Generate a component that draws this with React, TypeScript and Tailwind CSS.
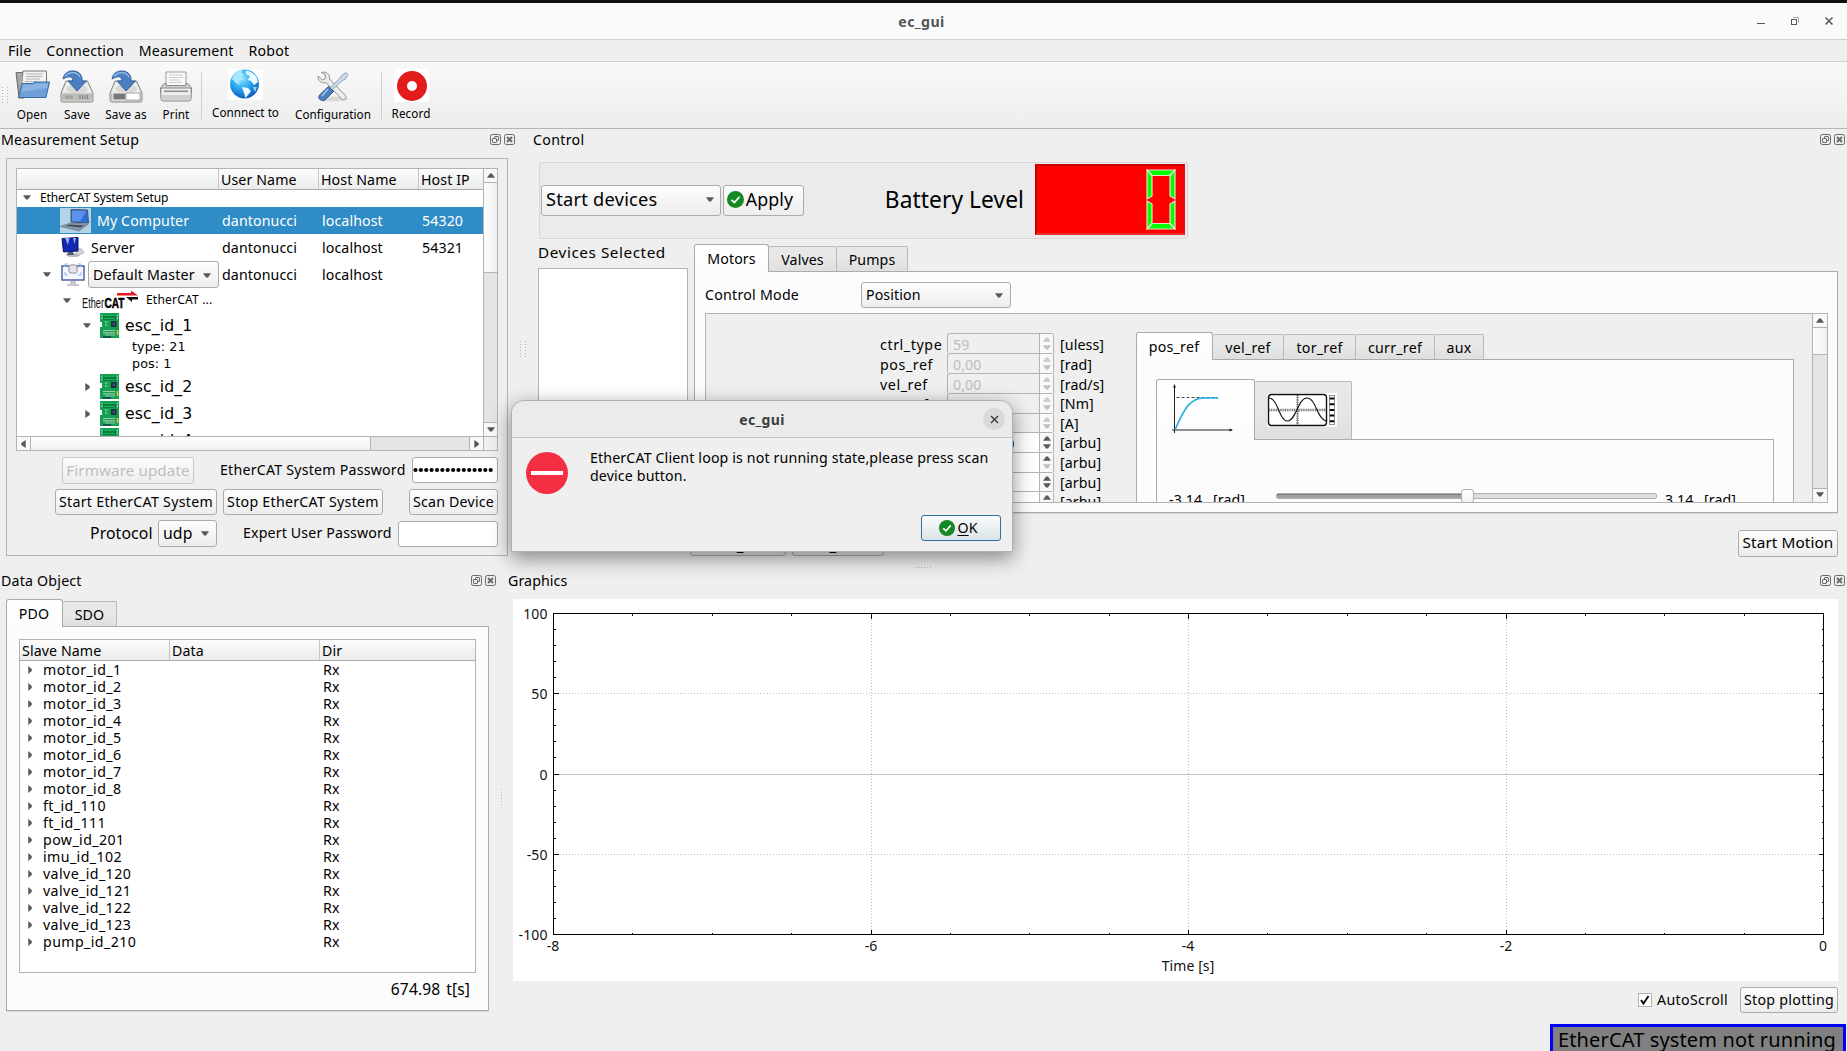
import React from "react";

type Kids = { children?: React.ReactNode; className?: string };

/* ---------- small shared pieces ---------- */

function Down({ className = "" }: { className?: string }) {
  return (
    <svg width="8" height="5" viewBox="0 0 8 5" className={`shrink-0 ${className}`}>
      <path d="M0 0.3H8L5 4.6H3Z" fill="#5a5a5a" />
    </svg>
  );
}

function Up({ faded = false }: { faded?: boolean }) {
  return (
    <svg width="8" height="5" viewBox="0 0 8 5" className="shrink-0">
      <path d="M0 4.7H8L5 0.4H3Z" fill={faded ? "#c9c9c9" : "#5a5a5a"} />
    </svg>
  );
}

function Side({ left = false, small = false }: { left?: boolean; small?: boolean }) {
  return (
    <svg width={small ? 4 : 5} height="8" viewBox="0 0 5 8" preserveAspectRatio="none" className="shrink-0">
      {left ? <path d="M4.7 0V8L0.3 5V3Z" fill="#5a5a5a" /> : <path d="M0.3 0V8L4.7 5V3Z" fill="#5a5a5a" />}
    </svg>
  );
}

function Btn({ children, className = "" }: Kids) {
  return (
    <button
      className={`flex shrink-0 items-center justify-center rounded-[3px] border border-[#ababab] bg-gradient-to-b from-[#fdfdfd] to-[#ededed] leading-none whitespace-nowrap ${className}`}
    >
      {children}
    </button>
  );
}

function Combo({ children, className = "" }: Kids) {
  return (
    <div
      className={`flex shrink-0 items-center justify-between rounded-[3px] border border-[#ababab] bg-gradient-to-b from-[#fdfdfd] to-[#ededed] pl-[4px] leading-none whitespace-nowrap ${className}`}
    >
      <span>{children}</span>
      <Down />
    </div>
  );
}

function Tab({ children, active = false, className = "" }: Kids & { active?: boolean }) {
  return active ? (
    <div
      className={`relative z-10 -mb-px flex shrink-0 items-center justify-center rounded-t-[3px] border border-b-0 border-[#ababab] bg-gradient-to-b from-white to-[#fcfcfc] leading-none ${className}`}
    >
      {children}
    </div>
  ) : (
    <div
      className={`mt-[2px] flex shrink-0 items-center justify-center rounded-t-[2px] border border-b-0 border-l-0 border-[#b9b9b9] bg-gradient-to-b from-[#e8e8e8] via-[#e7e7e7] to-[#dfdfdf] pt-[1px] leading-none ${className}`}
    >
      {children}
    </div>
  );
}

function DockButtons() {
  return (
    <svg width="26" height="12" viewBox="0 0 26 12" fill="none" stroke="#6b6a66" className="shrink-0">
      <rect x="0.5" y="0.5" width="10" height="10" rx="1.8" />
      <rect x="4.5" y="2.5" width="4" height="4" rx="0.5" />
      <rect x="2.5" y="4.5" width="4" height="4" rx="0.5" fill="#efefef" />
      <rect x="14.5" y="0.5" width="10" height="10" rx="1.8" />
      <path d="M17 3L22 8M22 3L17 8" strokeWidth="2" />
    </svg>
  );
}

function DockTitle({ children, className = "" }: Kids) {
  return (
    <div className={`flex h-[22px] shrink-0 items-center justify-between leading-none ${className}`}>
      <span>{children}</span>
      <DockButtons />
    </div>
  );
}

function GripV({ cols = 2 }: { cols?: number }) {
  return (
    <svg width="8" height="17" viewBox="0 0 8 17">
      {[0, 3, 6, 9, 12, 15].map((y) => (
        <g key={y} fill="#b4b4b4">
          <rect x="1" y={y} width="1" height="1" />
          {cols > 1 && <rect x="6" y={y} width="1" height="1" />}
        </g>
      ))}
    </svg>
  );
}

function Check({ size = 17 }: { size?: number }) {
  return (
    <svg width={size} height={size} viewBox="0 0 16 16" className="shrink-0">
      <circle cx="8" cy="8" r="8" fill="#158a24" />
      <path d="M4.2 8.3L7 10.8L11.8 5.4" fill="none" stroke="#fff" strokeWidth="1.6" />
    </svg>
  );
}

/* ---------- toolbar icons ---------- */

function OpenIcon() {
  return (
    <svg width="35" height="31" viewBox="0 0 35 31">
      <path d="M1 2.5H8L9 5V28H4Z" fill="#8d8f8c" stroke="#6d6f6c" />
      <path d="M8 1H31.5V20H6Z" fill="#f2f2f2" stroke="#777" />
      <path d="M11 4H28M11 6.5H27M11 9H25M10 11.5H22" stroke="#b3b3b3" />
      <path d="M2 3L7 3L8 16L5 28Z" fill="#aaa" />
      <path d="M7 13.5H18L20 12H34.5L31 27.5H3.5Z" fill="#6ea0d7" stroke="#3869a8" />
      <path d="M8 14.8H18.5L20.5 13.2H33L32 18L6.5 22Z" fill="#9bbfe6" opacity=".6" />
    </svg>
  );
}

function Drive({ as = false }: { as?: boolean }) {
  return (
    <svg width="34" height="33" viewBox="0 0 34 33">
      <path d="M6 11H27.5L33 23V30.5Q33 32 31.500 32H2.500Q1 32 1 30.500V23Z" fill="#dcdddb" stroke="#858783" />
      <path d="M7 12H26.500L31.500 22.500H2.500Z" fill="#eeeeed" />
      <ellipse cx="17" cy="19" rx="11" ry="4.500" fill="#d3d4d2" opacity=".8" />
      <path d="M1.500 23.500H32.500V30.500H1.500Z" fill="#babcb8" />
      {as ? (
        <>
          <rect x="4" y="23" width="13" height="7" fill="#777" stroke="#eee" />
          <rect x="17" y="23" width="14" height="7" fill="#fff" stroke="#aaa" />
        </>
      ) : (
        <>
          <path d="M5 25.500H13V28.500H5Z" fill="#a0a29e" />
          <path d="M20 25V29M22.500 25V29M25 25V29M27.500 25V29" stroke="#777" />
        </>
      )}
      <path d="M3 9C4 2 10 .5 14 1C20 1.500 22.500 6 22 11H26.500L17 21L8 11H12.500C13 7 10 5 3 9Z" fill="#4a7fc0" stroke="#2f5f9e" strokeWidth=".9" />
      <path d="M5 6.500C9 1.500 17 1 20 7" fill="none" stroke="#9fc0e6" strokeWidth="1.300" />
    </svg>
  );
}

function PrintIcon() {
  return (
    <svg width="32" height="31" viewBox="0 0 32 31">
      <path d="M6 1H26V16H6Z" fill="#fafafa" stroke="#999" />
      <path d="M9 4H23M9 6.500H23M9 9H20M9 11.500H22" stroke="#ccc" />
      <path d="M4 12.500H6V14.500H26V12.500H28L31.500 17V22H.5V17Z" fill="#d5d5d3" stroke="#8a8a88" />
      <path d="M.8 18.500Q.8 17 2.500 17H29.500Q31.200 17 31.200 18.500V27Q31.200 30 28.500 30H3.500Q.8 30 .8 27Z" fill="#ededeb" stroke="#858583" />
      <path d="M4 19.500H28V21H4Z" fill="#8c8c8a" />
      <path d="M2 24H30V27Q30 29 28 29H4Q2 29 2 27Z" fill="#cfcfcd" />
    </svg>
  );
}

function GlobeIcon() {
  return (
    <svg width="35" height="31" viewBox="0 0 35 31">
      <defs>
        <radialGradient id="globe" cx="0.4" cy="0.3" r="0.75">
          <stop offset="0" stopColor="#8fe6ff" />
          <stop offset="0.5" stopColor="#2aa6f0" />
          <stop offset="1" stopColor="#0b54b5" />
        </radialGradient>
      </defs>
      <rect width="35" height="31" fill="#fff" />
      <circle cx="16.500" cy="15" r="14.400" fill="url(#globe)" />
      <path d="M5 7C8 2.500 12 1 15 1L13 4L16 5L13.500 8L15.500 10L11 13L12 16L8 14L4 10Z" fill="#a5e8fb" />
      <path d="M18 1.500C23 2 27 5 29 9L30 13L26 16L23 12L20 11L22 7L18 5Z" fill="#e8faff" />
      <path d="M14 18L20 19L23 22L20 26L17.500 29L16 24Z" fill="#e8faff" />
      <path d="M25 18L29 18L27 23Z" fill="#8fdcf8" />
    </svg>
  );
}

function ToolsIcon() {
  return (
    <svg width="32" height="31" viewBox="0 0 32 31">
      <ellipse cx="16" cy="28" rx="15" ry="2.500" fill="#d9d9d9" />
      <path d="M1 5L5.500 9L8.500 7.500L8 3.500L4.500 1.500C9 0 13 3 12.500 8L28.500 24.500C30 27 27 30 24.500 28L9 11.500C4.500 13 0.500 9.500 1 5Z" fill="#eceeea" stroke="#8f918d" />
      <path d="M29 1.500L31 3.500L28.500 8L25.500 9.500L15 19L13 17L23 7L24.500 4.500Z" fill="#c9d8e8" stroke="#7f93a8" strokeWidth=".8" />
      <path d="M11.500 15.500L16.500 20.500L8 29C5 31 0 27.500 2.500 24Z" fill="#4c7fbd" stroke="#2c5690" />
      <path d="M11 18L5 25" stroke="#a4c3e8" strokeWidth="1.500" />
    </svg>
  );
}

function RecordIcon() {
  return (
    <svg width="35" height="33" viewBox="0 0 35 33">
      <rect width="35" height="33" fill="#fff" />
      <circle cx="18" cy="17" r="10" fill="none" stroke="#e21b1b" strokeWidth="10" />
    </svg>
  );
}

function Tool({ icon, label, className = "" }: { icon: React.ReactNode; label: string; className?: string }) {
  return (
    <div className={`flex shrink-0 flex-col items-center ${className}`}>
      <div className="flex h-[39px] items-center justify-center">{icon}</div>
      <span className="leading-none whitespace-nowrap">{label}</span>
    </div>
  );
}

/* ---------- tree icons ---------- */

function Laptop() {
  return (
    <svg width="31" height="25" viewBox="0 0 31 25" className="shrink-0">
      <rect width="31" height="25" fill="#b4d3e8" />
      <path d="M11 1.500L27.500 2L28.500 15L11 14Z" fill="#2e6fd8" stroke="#45536b" />
      <path d="M12 2.500L26 3L20 13.500L12 13Z" fill="#6fa5ee" opacity=".7" />
      <path d="M10 15L28.500 16L19 23L0.500 18.500Z" fill="#8a97a8" stroke="#5d6b7d" strokeWidth=".6" />
      <path d="M9.500 16.500L24 17.500L20.500 19.500L6 18Z" fill="#3f4c5e" />
    </svg>
  );
}

function ServerIcon() {
  return (
    <svg width="24" height="21" viewBox="0 0 24 21" className="shrink-0">
      <ellipse cx="12" cy="18" rx="7" ry="2" fill="#b9bcc4" />
      <path d="M15 11L21 12L23 16L16 19Z" fill="#d2d4da" stroke="#999" strokeWidth=".5" />
      <path d="M1 1.500L17 .5V14L2.500 15Z" fill="#1427b4" stroke="#0a1466" />
      <path d="M4 1L7 8L8.500 1ZM12 1L13.500 7L15 1Z" fill="#8fb2f5" />
      <path d="M7 15H12L13 18H6Z" fill="#555c6b" />
    </svg>
  );
}

function MonitorIcon() {
  return (
    <svg width="24" height="23" viewBox="0 0 24 23" fill="none" className="shrink-0">
      <rect x="1" y="3" width="22" height="14" fill="#f4f7ff" stroke="#4a5896" strokeWidth="1.400" />
      <rect x="8" y="2" width="8" height="8" rx="1.500" fill="#e4e4ea" stroke="#8e8e9c" />
      <path d="M4 4V1H7M17 1H20V4M4 9V12H7M17 12H20V9" stroke="#82b8e8" />
      <path d="M9 18H15V21H9Z" fill="#c6c6cc" />
      <path d="M6 22H18" stroke="#b5b5b9" strokeWidth="1.500" />
    </svg>
  );
}

function EtherCatLogo() {
  return (
    <svg width="57" height="20" viewBox="0 0 57 20" className="shrink-0 tracking-normal">
      <text x="0" y="17.500" textLength="22" lengthAdjust="spacingAndGlyphs" fontFamily="Liberation Sans" fontSize="14" fill="#111">Ether</text>
      <text x="22.500" y="17.500" textLength="20" lengthAdjust="spacingAndGlyphs" fontFamily="Liberation Sans" fontWeight="700" fontSize="14" fill="#000" stroke="#000" strokeWidth=".5">CAT</text>
      <path d="M35 3H49V.5L56 5.500H35Z" fill="#e31b23" />
      <path d="M56 7H44L50 12V9.500H56Z" fill="#111" />
    </svg>
  );
}

function Board() {
  return (
    <svg width="19" height="25" viewBox="0 0 19 25" className="shrink-0">
      <rect width="19" height="25" fill="#12a150" />
      <path d="M0 9H2V14H0Z" fill="#fff" />
      <rect x="3" y="2" width="13" height="5" fill="#0b7a3a" />
      <path d="M2 1.500V7M17.300 1.500V7" stroke="#a9e6c2" strokeDasharray="2 1" />
      <path d="M4 2.500H15M4 5.500H15" stroke="#14b45b" />
      <rect x="11" y="8" width="5.500" height="6" fill="#1d2b45" />
      <rect x="12.500" y="9.500" width="2.500" height="3" fill="#3a4c70" />
      <path d="M5 9H8M5 12H8" stroke="#8fd8ab" strokeDasharray="1.500 1" strokeWidth="1.500" />
      <path d="M3 17.500H15M3 19.800H15M5 22H15" stroke="#9fc9ae" strokeWidth="1.200" />
      <path d="M17.500 17V22" stroke="#e8c93a" strokeWidth="1.500" />
      <path d="M3 24H11" stroke="#0b3c50" strokeWidth="1.500" />
    </svg>
  );
}

/* ---------- measurement tree ---------- */

function TreeRow({
  first,
  cells = [],
  className = "",
}: {
  first: React.ReactNode;
  cells?: string[];
  className?: string;
}) {
  return (
    <div className={`flex shrink-0 items-center leading-none whitespace-nowrap ${className}`}>
      <div className="flex w-[202px] shrink-0 items-center">{first}</div>
      {cells.map((c, i) => (
        <div key={i} className="w-[100px] shrink-0 pt-[2px] pl-[3px]">
          {c}
        </div>
      ))}
    </div>
  );
}

function Arrow({ open = false, className = "" }: { open?: boolean; className?: string }) {
  return (
    <span className={`flex w-[20px] shrink-0 items-center justify-center ${className}`}>{open ? <Down /> : <Side />}</span>
  );
}

function EscRow({ name, open = false }: { name: string; open?: boolean }) {
  return (
    <TreeRow
      className="h-[27px] font-['DejaVu_Sans'] text-[15.7px]"
      first={
        <>
          <Arrow open={open} className="ml-[60px]" />
          <span className="ml-[3px] flex">
            <Board />
          </span>
          <span className="ml-[6px]">{name}</span>
        </>
      }
    />
  );
}

function MeasurementTree() {
  return (
    <div className="mt-[9px] ml-[9px] flex h-[283px] w-[482px] flex-col border border-[#b3b3b3] bg-white">
      <div className="flex h-[267px]">
        <div className="flex w-[466px] flex-col overflow-hidden">
          <div className="flex h-[21px] shrink-0 border-b border-[#ababab] bg-gradient-to-b from-[#fcfcfc] to-[#ebebeb] leading-[21px]">
            <div className="w-[202px] border-r border-[#c6c6c6]" />
            <div className="w-[100px] border-r border-[#c6c6c6] pl-[2px]">User Name</div>
            <div className="w-[100px] border-r border-[#c6c6c6] pl-[2px]">Host Name</div>
            <div className="pl-[2px]">Host IP</div>
          </div>
          <TreeRow
            className="h-[17px] pb-[2px] text-[12px]"
            first={
              <>
                <Arrow open />
                <span className="ml-[3px] tracking-[-0.12px]">EtherCAT System Setup</span>
              </>
            }
          />
          <TreeRow
            className="h-[27px] bg-[#308cc6] text-white"
            cells={["dantonucci", "localhost", "54320"]}
            first={
              <>
                <span className="ml-[43px]">
                  <Laptop />
                </span>
                <span className="ml-[6px] pt-[2px]">My Computer</span>
              </>
            }
          />
          <TreeRow
            className="h-[27px]"
            cells={["dantonucci", "localhost", "54321"]}
            first={
              <>
                <span className="ml-[44px]">
                  <ServerIcon />
                </span>
                <span className="ml-[6px] pt-[2px] tracking-[0.2px]">Server</span>
              </>
            }
          />
          <TreeRow
            className="h-[27px]"
            cells={["dantonucci", "localhost"]}
            first={
              <>
                <Arrow open className="ml-[20px]" />
                <span className="ml-[4px]">
                  <MonitorIcon />
                </span>
                <Combo className="-mr-[1px] ml-[3px] h-[27px] w-[131px] pt-[1px] pr-[7px] tracking-[0.2px]">Default Master</Combo>
              </>
            }
          />
          <TreeRow
            className="h-[24px] text-[12px]"
            first={
              <>
                <Arrow open className="ml-[40px]" />
                <span className="ml-[5px]">
                  <EtherCatLogo />
                </span>
                <span className="ml-[7px] tracking-[0.2px]">EtherCAT ...</span>
              </>
            }
          />
          <EscRow name="esc_id_1" open />
          <TreeRow className="h-[17px] pl-[115px] font-['DejaVu_Sans'] text-[12.700px]" first="type: 21" />
          <TreeRow className="h-[17px] pl-[115px] font-['DejaVu_Sans'] text-[12.700px]" first="pos: 1" />
          <EscRow name="esc_id_2" />
          <EscRow name="esc_id_3" />
          <EscRow name="esc_id_4" />
        </div>
        <div className="flex w-[14px] flex-col border-l border-[#b3b3b3] bg-[#e4e4e4]">
          <div className="flex h-[13px] items-center justify-center bg-[#f8f8f8]">
            <Up />
          </div>
          <div className="h-[91px] border-y border-[#b3b3b3] bg-gradient-to-r from-[#fdfdfd] to-[#f0f0f0]" />
          <div className="mt-auto flex h-[14px] items-center justify-center border-t border-[#b3b3b3] bg-[#f8f8f8]">
            <Down />
          </div>
        </div>
      </div>
      <div className="flex h-[14px] border-t border-[#b3b3b3] bg-[#e4e4e4]">
        <div className="flex w-[13px] items-center justify-center bg-[#f8f8f8]">
          <Side left />
        </div>
        <div className="w-[341px] border-x border-[#b3b3b3] bg-gradient-to-b from-[#fdfdfd] to-[#f0f0f0]" />
        <div className="ml-auto flex w-[14px] items-center justify-center border-l border-[#b3b3b3] bg-[#f8f8f8]">
          <Side />
        </div>
        <div className="w-[14px] border-l border-[#b3b3b3] bg-[#efefef]" />
      </div>
    </div>
  );
}

function MeasurementDock() {
  return (
    <div className="flex w-[516px] shrink-0 flex-col">
      <DockTitle className="pl-[1px] tracking-[0.17px]">Measurement Setup</DockTitle>
      <div className="mt-[7px] ml-[6px] h-[398px] w-[502px] border border-[#b5b5b5]">
        <MeasurementTree />
        <div className="mt-[6px] flex h-[27px] items-center pl-[55px] leading-none">
          <Btn className="h-[27px] w-[132px] border-[#c6c6c6] text-[15.200px] text-[#bebebe]">Firmware update</Btn>
          <span className="ml-[26px] w-[192px] tracking-[0.22px] whitespace-nowrap">EtherCAT System Password</span>
          <div className="mb-[1px] flex h-[26px] w-[86px] items-center rounded-[3px] border border-[#ababab] bg-white">
            <svg width="82" height="6">
              {Array.from({ length: 15 }, (_, i) => (
                <circle key={i} cx={2.5 + i * 5.370} cy="3" r="2.100" fill="#000" />
              ))}
            </svg>
          </div>
        </div>
        <div className="mt-[5px] flex pl-[48px]">
          <Btn className="h-[26px] w-[162px] tracking-[0.29px]">Start EtherCAT System</Btn>
          <Btn className="ml-[6px] h-[26px] w-[160px] tracking-[0.27px]">Stop EtherCAT System</Btn>
          <Btn className="ml-[26px] h-[26px] w-[89px] tracking-[0.2px]">Scan Device</Btn>
        </div>
        <div className="mt-[5px] flex items-center pl-[83px] leading-none">
          <span className="w-[68px] text-[15.800px]">Protocol</span>
          <Combo className="h-[27px] w-[59px] pr-[7px] text-[15.800px]">udp</Combo>
          <span className="ml-[26px] w-[155px] tracking-[0.15px] whitespace-nowrap">Expert User Password</span>
          <div className="h-[26px] w-[100px] rounded-[3px] border border-[#ababab] bg-white" />
        </div>
      </div>
    </div>
  );
}

/* ---------- control dock ---------- */

function Lcd() {
  return (
    <div className="flex h-[71px] w-[150px] justify-end border-2 border-[#c40000] border-r-[#e01010] border-b-[#f03030] bg-[#f00] pt-[3px] pr-[7px]">
      <svg width="30" height="61" viewBox="0 0 30 61">
        <g fill="#0f0" stroke="#e2e2c8" strokeWidth="1.200">
          <path d="M1 1H29L23.500 6.500H6.500Z" />
          <path d="M1 1L6 7V27L1 30Z" />
          <path d="M29 1L24 7V27L29 30Z" />
          <path d="M1 32L6 35V54L1 60Z" />
          <path d="M29 32L24 35V54L29 60Z" />
          <path d="M1 60L6.500 54.500H23.500L29 60Z" />
        </g>
      </svg>
    </div>
  );
}

const spins: { label: string; value: string; unit: string; off: boolean; h: string }[] = [
  { label: "ctrl_type", value: "59", unit: "[uless]", off: true, h: "h-[20px]" },
  { label: "pos_ref", value: "0,00", unit: "[rad]", off: true, h: "h-[20px]" },
  { label: "vel_ref", value: "0,00", unit: "[rad/s]", off: true, h: "h-[20px]" },
  { label: "tor_ref", value: "0,00", unit: "[Nm]", off: true, h: "h-[20px]" },
  { label: "curr_ref", value: "0,00", unit: "[A]", off: true, h: "h-[19px]" },
  { label: "gain_0", value: "100,0000", unit: "[arbu]", off: false, h: "h-[20px]" },
  { label: "gain_1", value: "0,00", unit: "[arbu]", off: false, h: "h-[20px]" },
  { label: "gain_2", value: "0,00", unit: "[arbu]", off: false, h: "h-[19px]" },
  { label: "gain_3", value: "0,00", unit: "[arbu]", off: false, h: "h-[20px]" },
];

function Spins() {
  return (
    <div className="mt-[19px] ml-[174px] flex w-[256px] shrink-0 flex-col">
      {spins.map((s, i) => (
        <div key={i} className={`flex shrink-0 leading-none ${s.h}`}>
          <span className="w-[67px] pt-[5px] tracking-[0.6px]">{s.label}</span>
          <div
            className={`flex w-[107px] rounded-t-[3px] border border-b-0 border-[#b3b3b3] ${s.off ? "bg-[#efefef] text-[#bdbdbd]" : "bg-white"}`}
          >
            <span className="w-[92px] shrink-0 border-r border-[#b3b3b3] pt-[4px] pl-[5px]">{s.value}</span>
            <span className="flex grow flex-col items-center justify-between bg-[#f9f9f9] py-[3px]">
              <Up faded={s.off} />
              <svg width="8" height="5" viewBox="0 0 8 5">
                <path d="M0 0.300H8L5 4.600H3Z" fill={s.off || i === 6 ? "#c0c0c0" : "#5a5a5a"} />
              </svg>
            </span>
          </div>
          <span className={`ml-[6px] ${i > 2 ? "pt-[4px]" : "pt-[5px]"}`}>{s.unit}</span>
        </div>
      ))}
    </div>
  );
}

function StepIcon() {
  return (
    <svg width="62" height="50" viewBox="0 0 62 50" fill="none">
      <path d="M2.500 1V49M0 46H60" stroke="#222" />
      <path d="M2.500 0L1 3.500H4ZM61 46L57.500 44.500V47.500Z" fill="#222" />
      <path d="M4.500 13.500H46" stroke="#444" strokeDasharray="3 2" />
      <path d="M3 46C12 25 18 14 32 14H46" stroke="#2aaee0" strokeWidth="1.600" />
    </svg>
  );
}

function ScopeIcon() {
  return (
    <svg width="70" height="34" viewBox="0 0 70 34" fill="none">
      <rect width="70" height="34" fill="#fff" />
      <rect x="1.500" y="1.500" width="58" height="31" rx="3" stroke="#111" strokeWidth="1.400" />
      <path d="M30.500 2V32M2 17H59" stroke="#666" strokeWidth=".7" />
      <path d="M30.500 2V32" stroke="#777" strokeWidth="3" strokeDasharray=".8 1.500" />
      <path d="M2 17H59" stroke="#777" strokeWidth="3" strokeDasharray=".8 1.500" />
      <path d="M2 5C11 5 12 28 20.500 28S31 5 40 5S50 26 59 28" stroke="#111" strokeWidth="1.100" />
      <rect x="62.500" y="2.500" width="5" height="29" stroke="#777" strokeWidth=".8" />
      <path d="M65 4.500V31" stroke="#000" strokeWidth="4.500" strokeDasharray="2 3.700" />
    </svg>
  );
}

function RefTabs() {
  return (
    <div className="mt-[18px] flex w-[658px] shrink-0 flex-col">
      <div className="flex h-[27px] tracking-[0.25px]">
        <Tab active className="h-[28px] w-[77px] pt-[2px] pr-[1px]">pos_ref</Tab>
        <Tab className="h-[25px] w-[71px] pt-[2px]">vel_ref</Tab>
        <Tab className="h-[25px] w-[72px] pt-[2px]">tor_ref</Tab>
        <Tab className="h-[25px] w-[79px] pt-[2px]">curr_ref</Tab>
        <Tab className="h-[25px] w-[49px] pt-[2px]">aux</Tab>
      </div>
      <div className="h-[180px] border border-[#ababab] bg-[#fcfcfc] pt-[19px] pl-[19px]">
        <div className="flex h-[60px]">
          <Tab active className="h-[61px] w-[99px] pr-[5px] pb-[2px]">
            <StepIcon />
          </Tab>
          <Tab className="h-[58px] w-[97px] pr-[2px] pb-[3px]">
            <ScopeIcon />
          </Tab>
        </div>
        <div className="flex h-[140px] w-[618px] border border-[#ababab] bg-[#fcfcfc] pt-[49px] pl-[12px] leading-none">
          <span className="mt-[4px] w-[44px]">-3.14</span>
          <span className="mt-[4px] w-[63px]">[rad]</span>
          <div className="mt-[4px] flex h-[6px] w-[381px] rounded-[2px] border border-[#b0b0b0] bg-[#dedede]">
            <div className="w-[184px] rounded-l-[2px] bg-[#a2a2a2] shadow-[inset_0_1px_0_#777]" />
            <div className="-mt-[5px] h-[14px] w-[13px] shrink-0 rounded-[3px] border border-[#b0b0b0] bg-gradient-to-b from-white to-[#f2f2f2]" />
          </div>
          <span className="mt-[4px] ml-[8px] w-[39px]">3.14</span>
          <span className="mt-[4px]">[rad]</span>
        </div>
      </div>
    </div>
  );
}

function ControlDock() {
  return (
    <div className="flex grow flex-col">
      <DockTitle className="pr-[1px] pl-[1px] tracking-[0.3px]">Control</DockTitle>
      <div className="mt-[11px] ml-[7px] flex h-[77px] w-[649px] shrink-0 items-center rounded-[2px] border border-[#d6d6d6] bg-[#ebebeb] pb-[3px] pl-[1px] leading-none">
        <Combo className="mt-[3px] h-[31px] w-[180px] pr-[6px] pb-[2px] text-[18.200px] tracking-[0.25px]">Start devices</Combo>
        <Btn className="mt-[3px] ml-[2px] h-[31px] w-[81px] gap-[2px] pr-[7px] pb-[2px] text-[17.800px]">
          <Check />
          Apply
        </Btn>
        <span className="mt-[2px] mr-[11px] ml-auto text-[22.700px] whitespace-nowrap">Battery Level</span>
        <div className="mr-[2px]">
          <Lcd />
        </div>
      </div>
      <div className="flex h-[274px] shrink-0">
        <div className="ml-[6px] w-[150px] shrink-0">
          <div className="flex h-[28px] items-center text-[15.300px] leading-none tracking-[0.55px] whitespace-nowrap">Devices Selected</div>
          <div className="mt-[1px] h-[240px] border border-[#b3b3b3] bg-white" />
        </div>
        <div className="mt-[5px] ml-[6px] w-[1144px]">
          <div className="flex h-[27px]">
            <Tab active className="h-[28px] w-[75px] pt-[1px]">Motors</Tab>
            <Tab className="h-[25px] w-[68px] pt-[2px]">Valves</Tab>
            <Tab className="h-[25px] w-[71px] pt-[2px]">Pumps</Tab>
          </div>
          <div className="h-[242px] border border-[#ababab] bg-[#fcfcfc] pl-[10px] shadow-[0_1px_0_#dadada]">
            <div className="flex h-[41px] items-center pt-[5px] leading-none">
              <span className="w-[156px] tracking-[0.25px]">Control Mode</span>
              <Combo className="h-[26px] w-[150px] pr-[7px]">Position</Combo>
            </div>
            <div className="flex h-[190px] w-[1123px] overflow-hidden border border-[#b3b3b3] bg-[#efefef]">
              <Spins />
              <RefTabs />
              <div className="ml-auto flex w-[15px] flex-col border-l border-[#b3b3b3] bg-[#e4e4e4]">
                <div className="flex h-[13px] items-center justify-center bg-[#f8f8f8]">
                  <Up />
                </div>
                <div className="h-[28px] border-y border-[#b3b3b3] bg-gradient-to-r from-[#fdfdfd] to-[#f0f0f0]" />
                <div className="mt-auto flex h-[14px] items-center justify-center border-t border-[#b3b3b3] bg-[#f8f8f8] pb-[2px]">
                  <Down />
                </div>
              </div>
            </div>
          </div>
        </div>
      </div>
      <div className="mt-[17px] flex pr-[9px] pl-[158px]">
        <Btn className="h-[26px] w-[96px] pt-[4px] text-[15px]">Send_SDO</Btn>
        <Btn className="ml-[6px] h-[26px] w-[92px] pt-[4px] text-[15px]">Set_Zero</Btn>
        <Btn className="ml-auto h-[27px] w-[100px] pb-[1px] text-[15.300px]">Start Motion</Btn>
      </div>
      <div className="mt-[10px] ml-[383px] h-px w-[17px] bg-[repeating-linear-gradient(90deg,#b4b4b4_0_1px,transparent_1px_3px)]" />
    </div>
  );
}

/* ---------- data object dock ---------- */

const slaves = [
  "motor_id_1", "motor_id_2", "motor_id_3", "motor_id_4", "motor_id_5", "motor_id_6", "motor_id_7", "motor_id_8",
  "ft_id_110", "ft_id_111", "pow_id_201", "imu_id_102", "valve_id_120", "valve_id_121", "valve_id_122", "valve_id_123",
  "pump_id_210",
];

function DataDock() {
  return (
    <div className="flex w-[497px] shrink-0 flex-col">
      <DockTitle className="pl-[1px] tracking-[0.2px]">Data Object</DockTitle>
      <div className="mt-[7px] ml-[6px] w-[483px]">
        <div className="flex h-[27px]">
          <Tab active className="h-[28px] w-[57px] pt-[1px] pr-[1px]">PDO</Tab>
          <Tab className="h-[25px] w-[54px] pt-[2px]">SDO</Tab>
        </div>
        <div className="h-[385px] border border-[#ababab] bg-[#fcfcfc] pt-[12px] pl-[12px] shadow-[0_1px_0_#dadada]">
          <div className="h-[334px] w-[457px] border border-[#b3b3b3] bg-white">
            <div className="flex h-[21px] border-b border-[#ababab] bg-gradient-to-b from-[#fcfcfc] to-[#ebebeb] leading-[22px]">
              <div className="w-[150px] border-r border-[#c6c6c6] pl-[2px]">Slave Name</div>
              <div className="w-[150px] border-r border-[#c6c6c6] pl-[2px]">Data</div>
              <div className="pl-[2px]">Dir</div>
            </div>
            {slaves.map((s) => (
              <div key={s} className="flex h-[17px] items-center pt-[1px] pl-[8px] leading-none">
                <Side small />
                <span className="ml-[11px] w-[280px] tracking-[0.4px]">{s}</span>
                <span>Rx</span>
              </div>
            ))}
          </div>
          <div className="flex h-[34px] items-center justify-end gap-[6px] pr-[18px] text-[15.600px] leading-none">
            <span>674.98</span>
            <span>t[s]</span>
          </div>
        </div>
      </div>
    </div>
  );
}

/* ---------- graphics dock ---------- */

function Plot() {
  const L = 40.5, R = 1310.5, T = 14.5, B = 335.5;
  const xs = Array.from({ length: 17 }, (_, i) => Math.round((i * (R - L)) / 16) + L);
  const ys = Array.from({ length: 21 }, (_, i) => Math.round((i * (B - T)) / 20) + T);
  return (
    <svg width="1325" height="382" viewBox="0 0 1325 382" className="block bg-white" shapeRendering="crispEdges" fontFamily="Noto Sans" fontSize="14" fill="#111">
      {[4, 8, 12].map((i) => (
        <path key={i} d={`M${xs[i]} ${T}V${B}`} stroke="#bdbdbd" strokeDasharray="1 2" />
      ))}
      {[5, 15].map((i) => (
        <path key={i} d={`M${L} ${ys[i]}H${R}`} stroke="#bdbdbd" strokeDasharray="1 2" />
      ))}
      <path d={`M${L} ${ys[10]}H${R}`} stroke="#c4c4c4" />
      {xs.map((x, i) => {
        const n = i % 4 === 0 ? 5 : 2;
        return <path key={i} d={`M${x} ${T}v${n}M${x} ${B}v-${n}`} stroke="#000" />;
      })}
      {ys.map((y, i) => {
        const n = i % 5 === 0 ? 5 : 2;
        return <path key={i} d={`M${L} ${y}h${n}M${R} ${y}h-${n}`} stroke="#000" />;
      })}
      <rect x={L} y={T} width={R - L} height={B - T} fill="none" stroke="#000" />
      {["100", "50", "0", "-50", "-100"].map((t, i) => (
        <text key={t} x="34.5" y={ys[i * 5] + 5.5} textAnchor="end">{t}</text>
      ))}
      {["-8", "-6", "-4", "-2", "0"].map((t, i) => (
        <text key={t} x={xs[i * 4] - 0.5} y="352" textAnchor="middle">{t}</text>
      ))}
      <text x="675" y="371.500" textAnchor="middle">Time [s]</text>
    </svg>
  );
}

function GraphicsDock() {
  return (
    <div className="flex grow flex-col">
      <DockTitle className="pr-[1px] pl-[3px]">Graphics</DockTitle>
      <div className="mt-[7px] ml-[8px]">
        <Plot />
      </div>
      <div className="mt-[6px] flex items-center justify-end pr-[9px] leading-none">
        <span className="flex h-[14px] w-[14px] items-center justify-center border border-[#b3b3b3] bg-white">
          <svg width="10" height="10" viewBox="0 0 10 10">
            <path d="M1 5L3.500 8.500L8.500 1" fill="none" stroke="#000" strokeWidth="1.900" />
          </svg>
        </span>
        <span className="mr-[12px] ml-[5px] w-[71px] tracking-[0.35px]">AutoScroll</span>
        <Btn className="h-[26px] w-[98px] tracking-[0.3px]">Stop plotting</Btn>
      </div>
    </div>
  );
}

/* ---------- message dialog ---------- */

function Dialog() {
  return (
    <div className="absolute top-[400px] left-[511px] z-30 h-[152px] w-[502px] rounded-t-[13px] border border-[#b0b0b0] bg-[#efefef] shadow-[0_6px_20px_rgba(0,0,0,0.45)]">
      <div className="flex h-[37px] items-center rounded-t-[13px] border-b border-[#c4c4c4] bg-[#ebebeb] leading-none">
        <span className="ml-[29px] grow pt-[2px] text-center text-[14px] font-bold tracking-[0.3px] text-[#3c3c3c]">ec_gui</span>
        <span className="mr-[7px] flex h-[22px] w-[22px] items-center justify-center rounded-full bg-[#d9d9d9]">
          <svg width="9" height="9" viewBox="0 0 9 9">
            <path d="M1 1L8 8M8 1L1 8" stroke="#333" strokeWidth="1.300" />
          </svg>
        </span>
      </div>
      <div className="flex pt-[12px] pl-[14px]">
        <svg width="42" height="42" viewBox="0 0 42 42" className="mt-[2px] shrink-0">
          <circle cx="21" cy="21" r="21" fill="#f42e43" />
          <rect x="5" y="19" width="32" height="4" fill="#fff" />
        </svg>
        <p className="-mt-[1px] ml-[22px] w-[408px] leading-[18px] tracking-[0.14px] whitespace-nowrap">
          EtherCAT Client loop is not running state,please press scan
          <br />
          device button.
        </p>
      </div>
      <div className="mt-[21px] flex justify-end pr-[11px]">
        <button className="flex h-[26px] w-[80px] items-center justify-center gap-[2px] rounded-[3px] border border-[#30709c] bg-gradient-to-b from-[#fbfcfd] to-[#dbe3e8] pr-[5px] leading-none">
          <Check size={16} />
          <span>
            <span className="underline decoration-1 underline-offset-[2px]">O</span>K
          </span>
        </button>
      </div>
    </div>
  );
}

/* ---------- window ---------- */

export default function App() {
  return (
    <div className="relative flex h-[1051px] w-[1847px] flex-col overflow-hidden bg-[#efefef] font-['Noto_Sans',sans-serif] text-[14.200px] tracking-[0.1px] text-black">
      <div className="h-[3px] shrink-0 bg-[#111]" />
      <div className="flex h-[37px] shrink-0 items-center border-b border-[#d0d0d0] bg-[#fafafa] leading-none">
        <span className="ml-[90px] grow pt-[2px] text-center font-bold tracking-[0.4px] text-[#555]">ec_gui</span>
        <svg width="80" height="10" viewBox="0 0 80 10" fill="none" stroke="#555" className="mr-[14px] mb-[1px]">
          <path d="M4 7.500H12" />
          <path d="M40 1.500H45.500V7" stroke="#aaa" />
          <rect x="38.500" y="3.500" width="5" height="5" />
          <path d="M72.500 1.500L79.500 8.500M79.500 1.500L72.500 8.500" strokeWidth="1.500" />
        </svg>
      </div>
      <div className="flex h-[22px] shrink-0 items-center gap-[15px] border-b border-[#d0d0d0] pt-[2px] pl-[8px] tracking-[0.15px] leading-none">
        <span>File</span>
        <span>Connection</span>
        <span>Measurement</span>
        <span>Robot</span>
      </div>
      <div className="flex h-[67px] shrink-0 items-start border-b border-[#b5b5b5] bg-gradient-to-b from-[#f9f9f9] to-[#ededed] text-[11.700px]">
        <div className="mt-[25px] ml-[1px]">
          <GripV />
        </div>
        <Tool className="mt-[4px] ml-[5px] w-[36px] gap-[4px]" icon={<OpenIcon />} label="Open" />
        <Tool className="mt-[5px] ml-[9px] w-[36px] gap-[3px]" icon={<Drive />} label="Save" />
        <Tool className="mt-[5px] ml-[11px] w-[40px] gap-[3px]" icon={<Drive as />} label="Save as" />
        <Tool className="mt-[5px] ml-[13px] w-[34px] gap-[3px]" icon={<PrintIcon />} label="Print" />
        <div className="mt-[10px] ml-[8px] h-[48px] w-px bg-[#cfcfcf]" />
        <Tool className="mt-[3px] ml-[10px] w-[67px] gap-[3px] tracking-[0px]" icon={<GlobeIcon />} label="Connnect to" />
        <Tool className="mt-[5px] ml-[15px] w-[78px] gap-[3px] tracking-[0px]" icon={<ToolsIcon />} label="Configuration" />
        <div className="mt-[10px] ml-[9px] h-[48px] w-px bg-[#cfcfcf]" />
        <Tool className="mt-[4px] ml-[9px] w-[40px] gap-[3px]" icon={<RecordIcon />} label="Record" />
      </div>
      <div className="flex h-[441px] shrink-0">
        <MeasurementDock />
        <div className="w-[16px] shrink-0 pt-[212px] pl-[3px]">
          <GripV />
        </div>
        <ControlDock />
      </div>
      <div className="flex h-[454px] shrink-0">
        <DataDock />
        <div className="w-[8px] shrink-0 pt-[219px] pl-[3px]">
          <GripV cols={1} />
        </div>
        <GraphicsDock />
      </div>
      <div className="flex shrink-0 justify-end pr-[1px]">
        <div className="h-[34px] w-[296px] border-[3px] border-[#0000ff] bg-[#808080] pl-[5px] text-[20px] leading-[26px] tracking-[0.13px] whitespace-nowrap">
          EtherCAT system not running
        </div>
      </div>
      <Dialog />
    </div>
  );
}
